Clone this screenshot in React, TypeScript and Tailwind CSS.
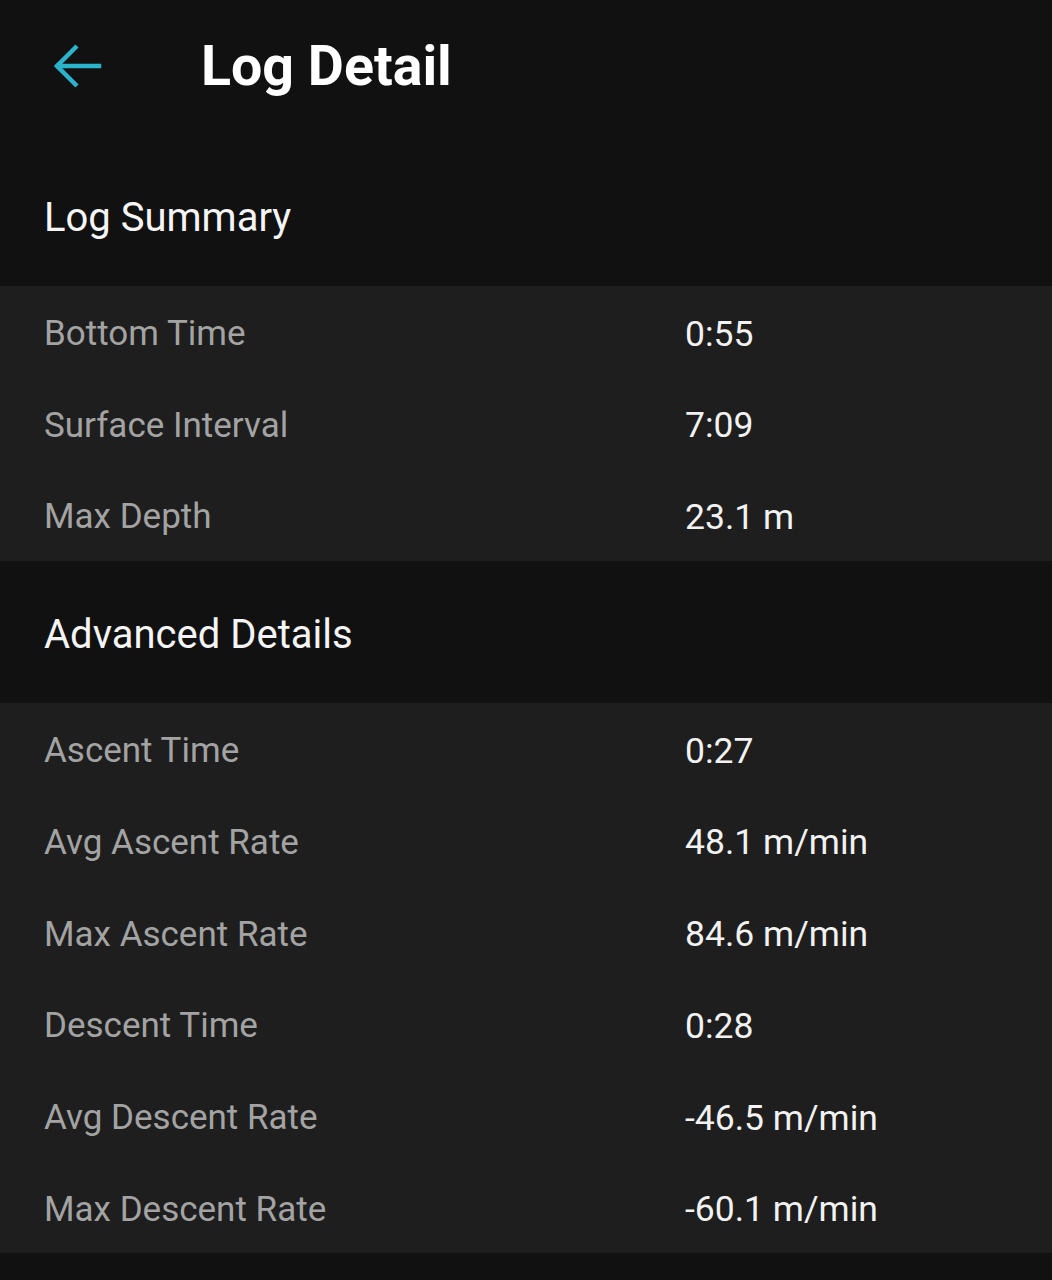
import React from 'react';

type Row = { label: string; value: string };

const summary: Row[] = [
  { label: 'Bottom Time', value: '0:55' },
  { label: 'Surface Interval', value: '7:09' },
  { label: 'Max Depth', value: '23.1 m' },
];

const advanced: Row[] = [
  { label: 'Ascent Time', value: '0:27' },
  { label: 'Avg Ascent Rate', value: '48.1 m/min' },
  { label: 'Max Ascent Rate', value: '84.6 m/min' },
  { label: 'Descent Time', value: '0:28' },
  { label: 'Avg Descent Rate', value: '-46.5 m/min' },
  { label: 'Max Descent Rate', value: '-60.1 m/min' },
];

const SectionHeader: React.FC<{ title: string }> = ({ title }) => (
  <div className="h-[142px] flex items-center px-[44px] pt-[5px]">
    <h2 className="text-[40px] text-[#f5f5f5] leading-none">{title}</h2>
  </div>
);

const Panel: React.FC<{ rows: Row[] }> = ({ rows }) => (
  <div className="bg-[#1e1e1e]">
    {rows.map((r) => (
      <div key={r.label} className="h-[91.7px] flex items-center pt-[5px]">
        <span className="w-[685px] pl-[44px] text-[35px] text-[#a3a3a3]">{r.label}</span>
        <span className="text-[35.5px] text-[#f2f2f2]">{r.value}</span>
      </div>
    ))}
  </div>
);

export default function App() {
  return (
    <div className="min-h-[1280px] bg-[#111111] font-['Roboto',sans-serif]">
      <div className="h-[144px] flex items-start pt-[28px]">
        <button type="button" className="ml-[52px] mt-[13px] w-[52px] h-[52px]">
          <svg viewBox="0 0 52 52" width="52" height="52" fill="none" stroke="#2bb3cc" strokeWidth="4.5" strokeLinecap="square">
            <path d="M47 25H6" />
            <path d="M25 5L5 25l20 20" strokeLinecap="butt" />
          </svg>
        </button>
        <h1 className="ml-[97px] text-[55.5px] font-bold text-white leading-none mt-[11px]">Log Detail</h1>
      </div>
      <SectionHeader title="Log Summary" />
      <Panel rows={summary} />
      <SectionHeader title="Advanced Details" />
      <Panel rows={advanced} />
    </div>
  );
}
